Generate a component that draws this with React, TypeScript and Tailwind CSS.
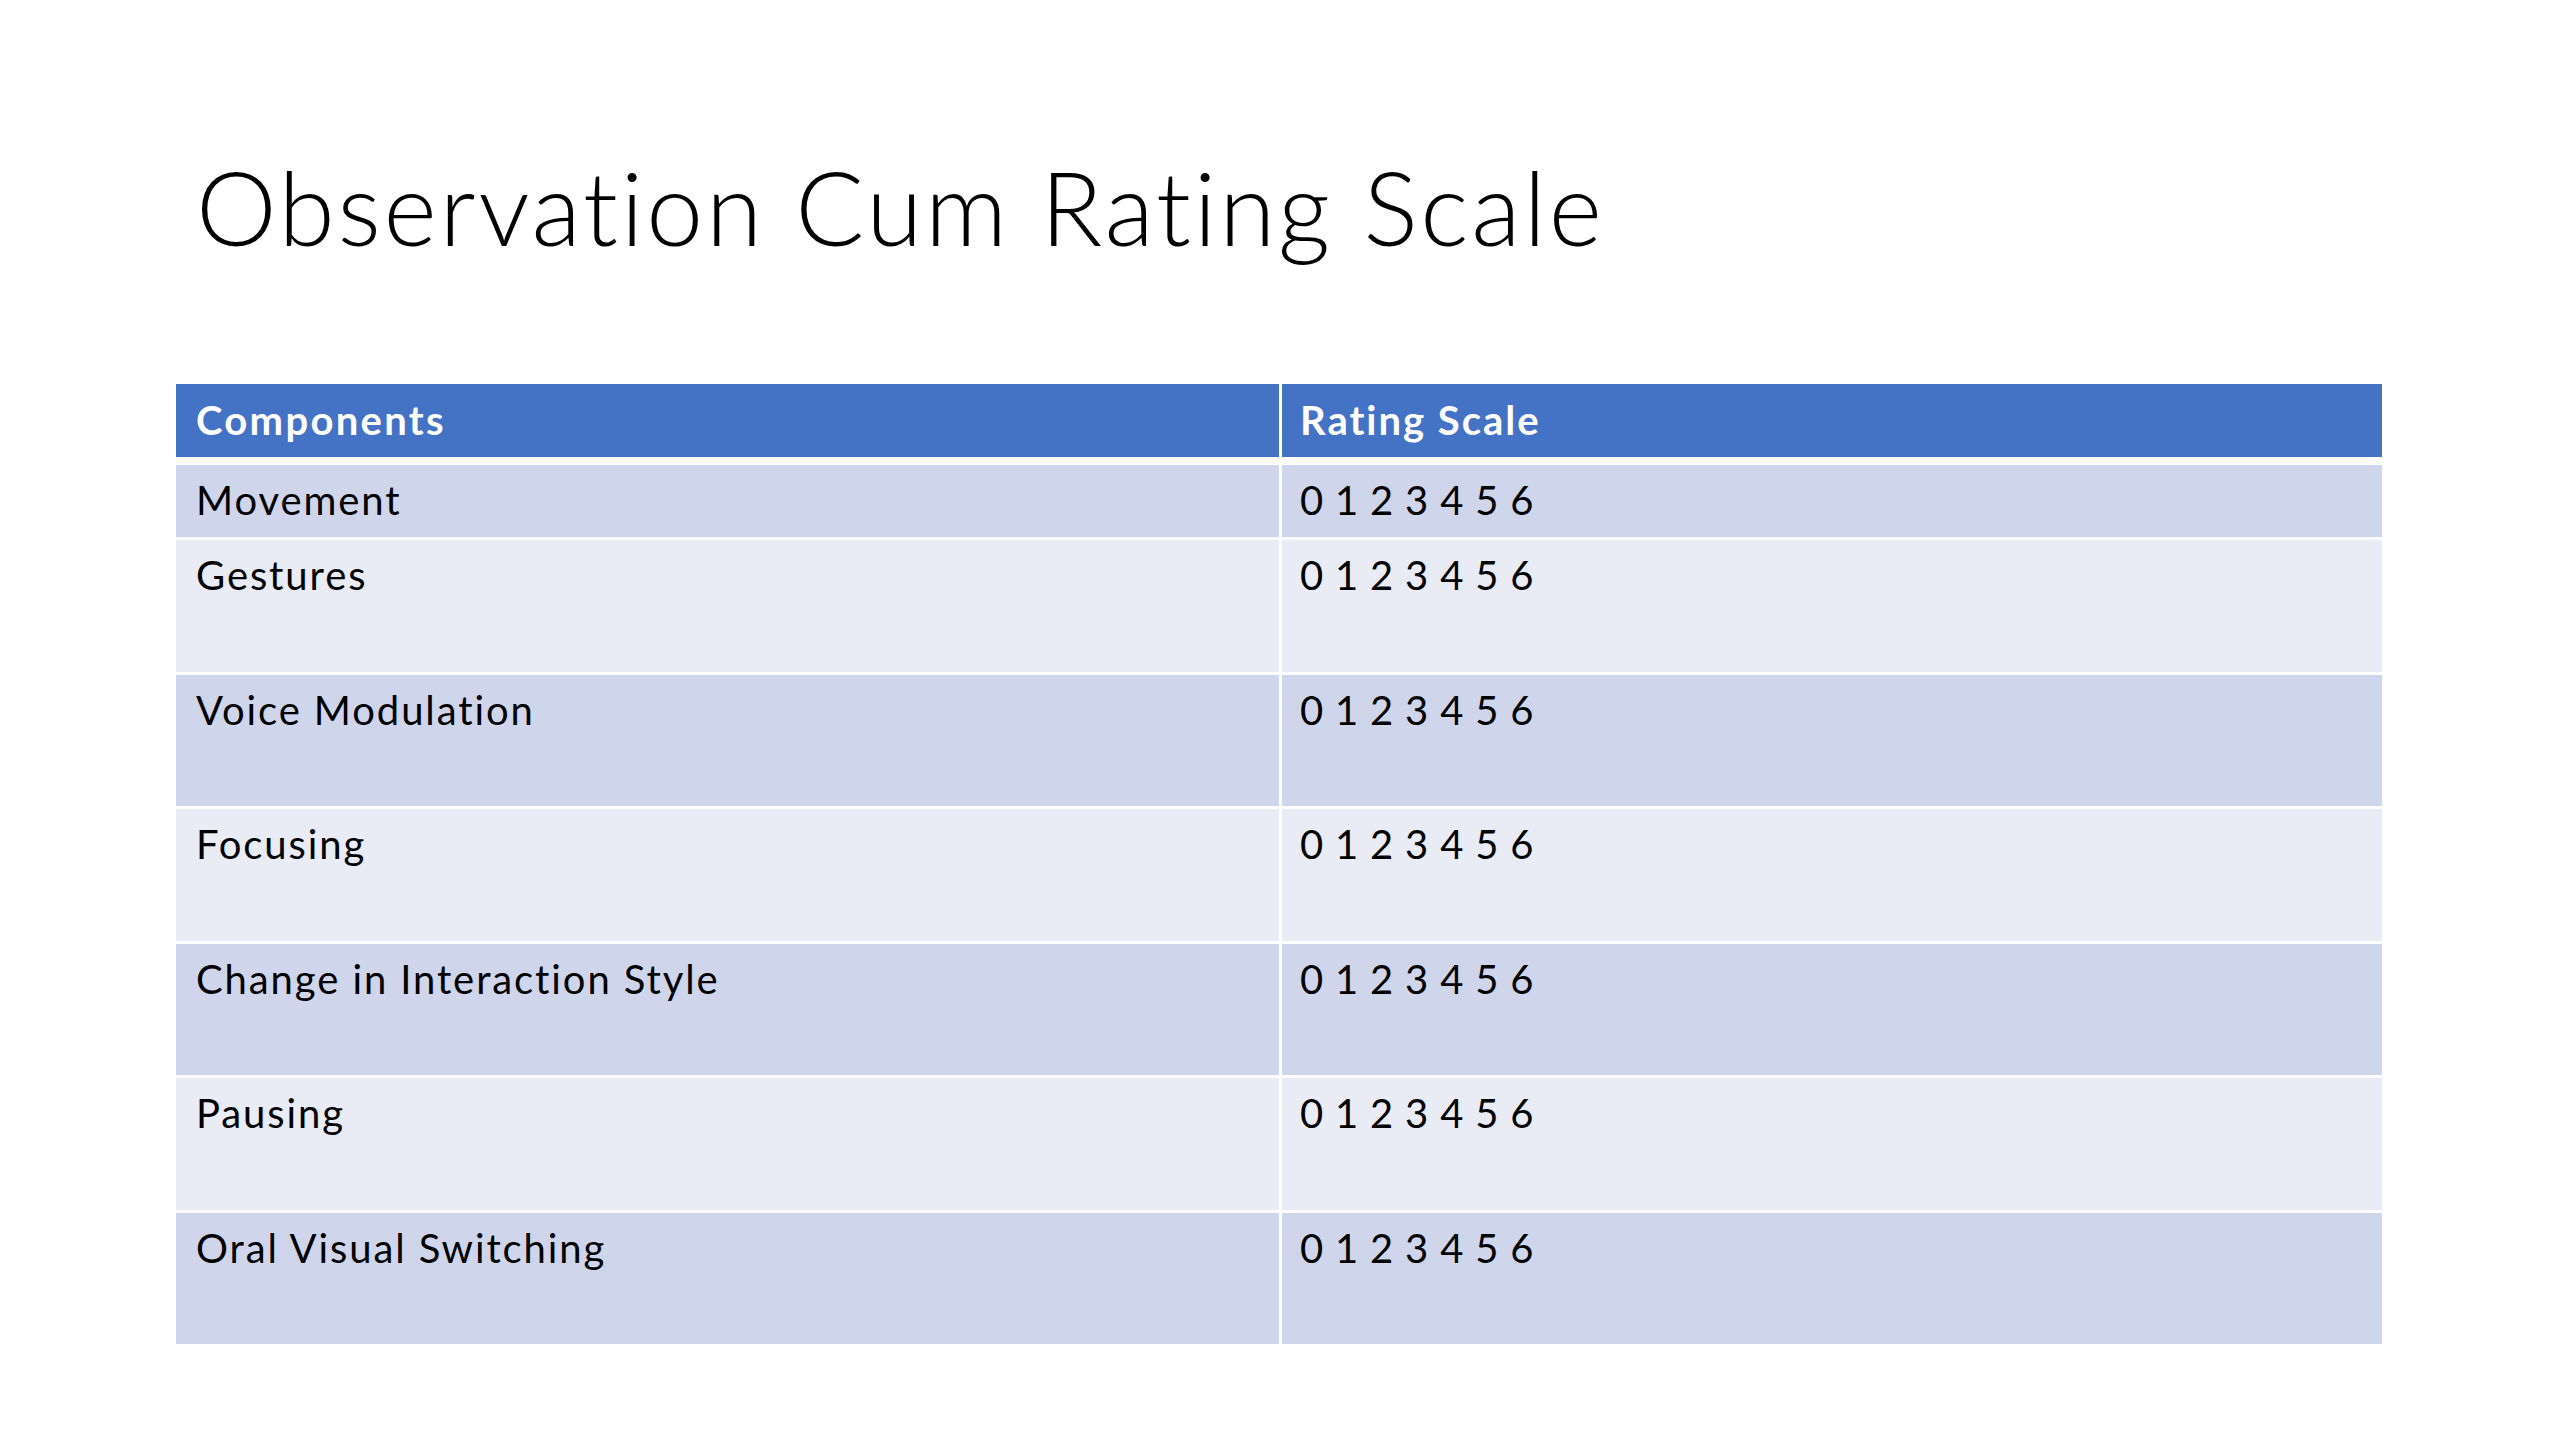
const rows = [
  { name: 'Movement', h: 'h-[72px]', tone: 'bg-[#cfd5ea]' },
  { name: 'Gestures', h: 'h-[132px]', tone: 'bg-[#e9ebf5]' },
  { name: 'Voice Modulation', h: 'h-[131px]', tone: 'bg-[#cfd5ea]' },
  { name: 'Focusing', h: 'h-[132px]', tone: 'bg-[#e9ebf5]' },
  { name: 'Change in Interaction Style', h: 'h-[131px]', tone: 'bg-[#cfd5ea]' },
  { name: 'Pausing', h: 'h-[132px]', tone: 'bg-[#e9ebf5]' },
  { name: 'Oral Visual Switching', h: 'h-[131px]', tone: 'bg-[#cfd5ea]' },
];

export default function App() {
  return (
    <div className="w-[2560px] h-[1440px] bg-white overflow-hidden font-['Lato','Open_Sans',sans-serif] text-black">
      <h1 className="pt-[156px] pl-[196px] text-[102px] leading-none font-light tracking-[2.8px]">
        Observation Cum Rating Scale
      </h1>

      <div className="ml-[176px] mt-[126px] w-[2206px] flex flex-col">
        {/* header */}
        <div className="grid grid-cols-[1103px_1fr] gap-x-[3px] mb-[8px]">
          <div className="h-[73px] bg-[#4472c4] pt-[16px] pl-[20px] text-[40px] leading-none font-bold tracking-[2.3px] text-white">
            Components
          </div>
          <div className="h-[73px] bg-[#4472c4] pt-[16px] pl-[18px] text-[40px] leading-none font-bold tracking-[2px] text-white">
            Rating Scale
          </div>
        </div>

        {/* body */}
        <div className="flex flex-col gap-y-[3px]">
          {rows.map((r) => (
            <div key={r.name} className="grid grid-cols-[1103px_1fr] gap-x-[3px]">
              <div className={`${r.h} ${r.tone} pt-[15px] pl-[20px] text-[40px] leading-none tracking-[1.9px]`}>{r.name}</div>
              <div className={`${r.h} ${r.tone} pt-[15px] pl-[18px] text-[40px] leading-none tracking-[1.8px] [word-spacing:-2px]`}>
                0 1 2 3 4 5 6
              </div>
            </div>
          ))}
        </div>
      </div>
    </div>
  );
}
